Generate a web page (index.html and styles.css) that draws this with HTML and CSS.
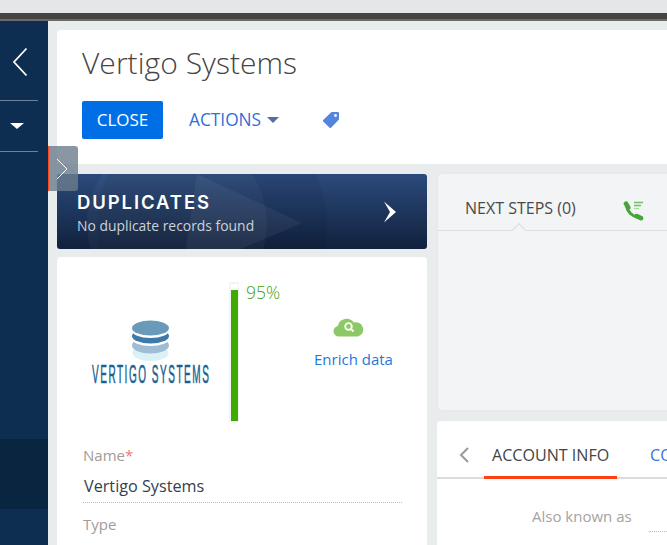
FILE: index.html
```html
<!DOCTYPE html>
<html lang="en">
<head>
<meta charset="utf-8">
<title>Vertigo Systems</title>
<link rel="stylesheet" href="styles.css">
</head>
<body>
<div class="chrome"></div>
<div class="app">
  <nav class="sidebar">
    <div class="nav-back">
      <svg width="18" height="30" viewBox="0 0 18 30"><path d="M15.500 1.500 3 15l12.500 13.500" fill="none" stroke="#fff" stroke-width="1.800"/></svg>
    </div>
    <div class="nav-menu"><span class="caret-white"></span></div>
    <div class="nav-band"></div>
  </nav>
  <main class="main">
    <header class="head-card">
      <h1 class="title">Vertigo Systems</h1>
      <div class="actions">
        <button class="btn-close">CLOSE</button>
        <span class="btn-actions">ACTIONS<span class="caret-blue"></span></span>
        <svg class="tag" width="18" height="18" viewBox="0 0 18 18"><path d="M9.500 1H16a1 1 0 0 1 1 1v6.500L9 16.800a1 1 0 0 1-1.400 0L1.200 10.400a1 1 0 0 1 0-1.400Z" fill="#5584e0"/><circle cx="13.500" cy="4.500" r="1.400" fill="#fff"/></svg>
      </div>
    </header>
    <div class="columns">
      <div class="col-left">
        <section class="dup">
          <svg class="dup-art" width="370" height="75" viewBox="0 0 370 75"><circle cx="120" cy="50" r="90" fill="#fff" fill-opacity=".035"/><circle cx="155" cy="50" r="115" fill="#000" fill-opacity=".05"/><path d="M140 0 245 49 125 100Z" fill="#fff" fill-opacity=".05"/></svg>
          <div class="dup-text">
            <div class="dup-title">DUPLICATES</div>
            <div class="dup-sub">No duplicate records found</div>
          </div>
          <svg class="dup-arrow" width="14" height="22" viewBox="0 0 14 22"><path d="M1 .5 13 11 1 21.500 7 11Z" fill="#fff"/></svg>
        </section>
        <section class="profile">
          <div class="profile-top">
            <svg class="logo" width="120" height="72" viewBox="0 0 120 72">
              <ellipse cx="60.500" cy="35" rx="18" ry="8" fill="#dcf0f7"/>
              <ellipse cx="60.500" cy="27.500" rx="18.500" ry="8" fill="#9fbdd4"/>
              <ellipse cx="60.500" cy="20" rx="19" ry="8" fill="#fff"/>
              <ellipse cx="60.500" cy="18" rx="18.500" ry="7.500" fill="#3f79a8"/>
              <ellipse cx="60.500" cy="12" rx="19" ry="8" fill="#fff"/>
              <ellipse cx="60.500" cy="10" rx="18.500" ry="7.500" fill="#6a9aba"/>
              <text class="logo-text" transform="translate(2 65) scale(.4 1)" textLength="292" lengthAdjust="spacing">VERTIGO SYSTEMS</text>
            </svg>
            <div class="score">
              <div class="score-track"><div class="score-fill"></div></div>
              <div class="score-value">95%</div>
            </div>
            <div class="enrich">
              <svg class="cloud" width="31" height="21" viewBox="0 0 31 21"><path d="M6 20.500a5.300 5.300 0 0 1-1.200-10.500A9 9 0 0 1 20.800 6.500a7 7 0 0 1 4.200 14Z" fill="#8cc966"/><circle cx="15.500" cy="10.500" r="3.300" fill="none" stroke="#fff" stroke-width="1.800"/><path d="m18 13 2.500 2.500" stroke="#fff" stroke-width="2"/></svg>
              <a class="enrich-link">Enrich data</a>
            </div>
          </div>
          <div class="field">
            <div class="field-label">Name<span class="req">*</span></div>
            <div class="field-value">Vertigo Systems</div>
          </div>
          <div class="field-label type-label">Type</div>
        </section>
      </div>
      <div class="col-right">
        <section class="steps">
          <div class="steps-head">
            <span class="steps-title">NEXT STEPS (0)</span>
            <svg class="phone" width="21" height="20" viewBox="0 0 21 20"><path d="M3.500 5C4.500 10.500 9 15.500 15.500 16.500" fill="none" stroke="#44a637" stroke-width="3"/><path d="M3 2.700 5.200 6.500M13.700 15.200 18 17.200" fill="none" stroke="#44a637" stroke-width="4.600" stroke-linecap="round"/><path d="M11 1.500h9M11 4.500h7" stroke="#72bf66" stroke-width="1.300"/><path d="M11 7.500h5" stroke="#a9d9a2" stroke-width="1.300"/></svg>
            <span class="notch"></span>
          </div>
        </section>
        <section class="info">
          <div class="tabs">
            <svg class="tab-prev" width="10" height="16" viewBox="0 0 10 16"><path d="M9 1 2 8l7 7" fill="none" stroke="#9a9a9a" stroke-width="2"/></svg>
            <span class="tab tab-active">ACCOUNT INFO</span>
            <span class="tab tab-next">CONTACTS</span>
          </div>
          <div class="aka">
            <span class="aka-label">Also known as</span>
            <span class="aka-input"></span>
          </div>
        </section>
      </div>
    </div>
    <div class="pull"><svg width="12" height="22" viewBox="0 0 12 22"><path d="M1 1 11 11 1 21" fill="none" stroke="#fff" stroke-width="1"/></svg></div>
  </main>
</div>
</body>
</html>
```
FILE: styles.css
```css
* { box-sizing: border-box; }
html, body { margin: 0; height: 100%; overflow: hidden; }
body {
  width: 667px; height: 545px;
  background: #e9eced;
  font-family: "Open Sans", sans-serif;
  display: flex; flex-direction: column;
}
.chrome {
  flex: none; height: 21px;
  background: #e4e7ea;
  border-bottom: 2px solid #6a6a6a;
  box-shadow: inset 0 -6px 0 #444342;
}
.app { flex: 1; display: flex; min-height: 0; }
.sidebar { flex: none; width: 48px; background: #0d2e50; display: flex; flex-direction: column; }
.nav-back { height: 79px; padding: 26px 0 0 11px; }
.nav-back svg { display: block; }
.nav-menu {
  width: 38px; height: 52px;
  border-top: 1px solid #6d8198; border-bottom: 1px solid #6d8198;
  display: flex; justify-content: center; align-items: center; padding: 0 5px 0 0;
}
.caret-white { width: 0; height: 0; border: 7px solid transparent; border-top: 6px solid #fff; border-bottom: 0; }
.nav-band { margin-top: 287px; height: 70px; background: #0a2540; }
.main { flex: 1; min-width: 0; padding: 9px 0 0 9px; position: relative; overflow: hidden; }
.head-card {
  width: 620px; height: 134px;
  background: #fff; border-radius: 4px 0 0 0;
  padding: 13px 0 0 25px;
}
.title { margin: 0; font-weight: 300; font-size: 30px; letter-spacing: .05px; line-height: 40px; color: #444; }
.actions { display: flex; align-items: center; margin-top: 18px; }
.btn-close {
  width: 81px; height: 38px; border: 0; border-radius: 2px;
  background: #006fe6; color: #fff;
  font: 400 17px "Open Sans", sans-serif;
  padding: 0 0 2px;
}
.btn-actions { margin: -2px 0 0 26px; font-size: 17.300px; color: #2f6fd6; display: flex; align-items: center; }
.caret-blue { margin: 2px 0 0 6px; width: 0; height: 0; border: 6px solid transparent; border-top: 6px solid #51709f; border-bottom: 0; }
.tag { margin-left: 43px; }
.columns { display: flex; gap: 10px; padding-top: 10px; width: 780px; }
.col-left { flex: none; width: 370px; display: flex; flex-direction: column; gap: 8px; }
.col-right { flex: none; width: 400px; display: flex; flex-direction: column; gap: 10px; margin-top: -1px; }
.dup {
  position: relative; height: 75px; border-radius: 3px; overflow: hidden;
  background: linear-gradient(#2b4a7c, #11213d);
  display: flex; align-items: center; justify-content: space-between;
  padding: 0 30px 0 20px;
}
.dup-art { position: absolute; left: 0; top: 0; }
.dup-text { position: relative; padding-top: 6px; }
.dup-title { font: 600 18.500px/20px Inter, sans-serif; letter-spacing: 1.900px; color: #fff; }
.dup-sub { padding-top: 2px; font-size: 13.900px; line-height: 24px; color: #ccd2da; }
.dup-arrow { position: relative; }
.profile { background: #fff; border-radius: 4px 4px 0 0; height: 300px; padding: 25px 26px 0; }
.profile-top { display: flex; height: 140px; }
.logo { flex: none; margin: 36px 0 0 7px; overflow: visible; }
.score { flex: none; display: flex; margin-left: 19px; }
.score-track {
  width: 10px; height: 140px;
  border: 2px solid #f3f5f5; border-left-width: 2px; border-right-width: 1px; border-bottom-width: 1px;
  background: #fff;
  display: flex; align-items: flex-end;
}
.score-fill { width: 100%; height: 131px; background: #3faa00; }
.score-value { margin-left: 7px; width: 36px; font-size: 17.500px; font-weight: 300; line-height: 20px; color: #3f9f10; }
.enrich { margin-left: 32px; display: flex; flex-direction: column; align-items: center; padding-top: 34px; }
.cloud { margin-right: 9px; }
.enrich-link { margin-top: 12px; font-size: 15px; line-height: 20px; color: #1f76e0; white-space: nowrap; }
.field { margin-top: 23px; width: 319px; border-bottom: 1px dotted #bdbdbd; height: 58px; }
.field-label { font-size: 15px; line-height: 20px; color: #a19c98; }
.req { color: #f0796e; }
.field-value { margin: 10px 0 0 1px; font-size: 16.200px; line-height: 22px; color: #33404f; }
.type-label { margin-top: 11px; }
.logo-text { font: 400 25px "Liberation Sans", sans-serif; stroke: #1c5f93; stroke-width: .6px; fill: #1c5f93; }
.steps { height: 238px; background: #f2f4f5; border: 1px solid #e6e8ea; border-radius: 4px 0 0 4px; }
.steps-head {
  position: relative; height: 57px;
  border-bottom: 1px solid #dcdee0;
  display: flex; align-items: center; padding: 12px 0 0 27px;
}
.steps-title { font-size: 16px; color: #4a4a4a; margin-right: 47px; }
.phone { margin-top: 6px; }
.notch {
  position: absolute; left: 76px; bottom: -5px;
  width: 10px; height: 10px; transform: rotate(45deg);
  background: #f2f4f5; border-left: 1px solid #dcdee0; border-top: 1px solid #dcdee0;
}
.info { height: 140px; background: #fff; border-radius: 4px 0 0 0; }
.tabs { display: flex; height: 58px; border-bottom: 2px solid #dcdcdc; position: relative; padding-left: 47px; }
.tab-prev { position: absolute; left: 22px; top: 26px; }
.tab { font-size: 16.100px; line-height: 20px; padding-top: 24px; }
.tab-active { width: 133px; flex: none; padding-left: 8px; height: 58px; border-bottom: 3px solid #ff4013; color: #444; }
.tab-next { margin-left: 33px; color: #3b72d9; white-space: nowrap; }
.aka { display: flex; padding: 27px 0 0 95px; }
.aka-label { font-size: 15px; line-height: 20px; color: #a3a3a3; }
.aka-input { width: 60px; margin-left: 17px; height: 26px; border-bottom: 1px dotted #bdbdbd; }
.pull {
  position: absolute; left: -1px; top: 125px;
  width: 31px; height: 45px;
  background: rgba(108,125,141,.8);
  border-left: 2px solid #ff4a1c;
  border-radius: 0 3px 3px 0;
  display: flex; align-items: center; justify-content: center;
  padding-right: 3px;
}
```
